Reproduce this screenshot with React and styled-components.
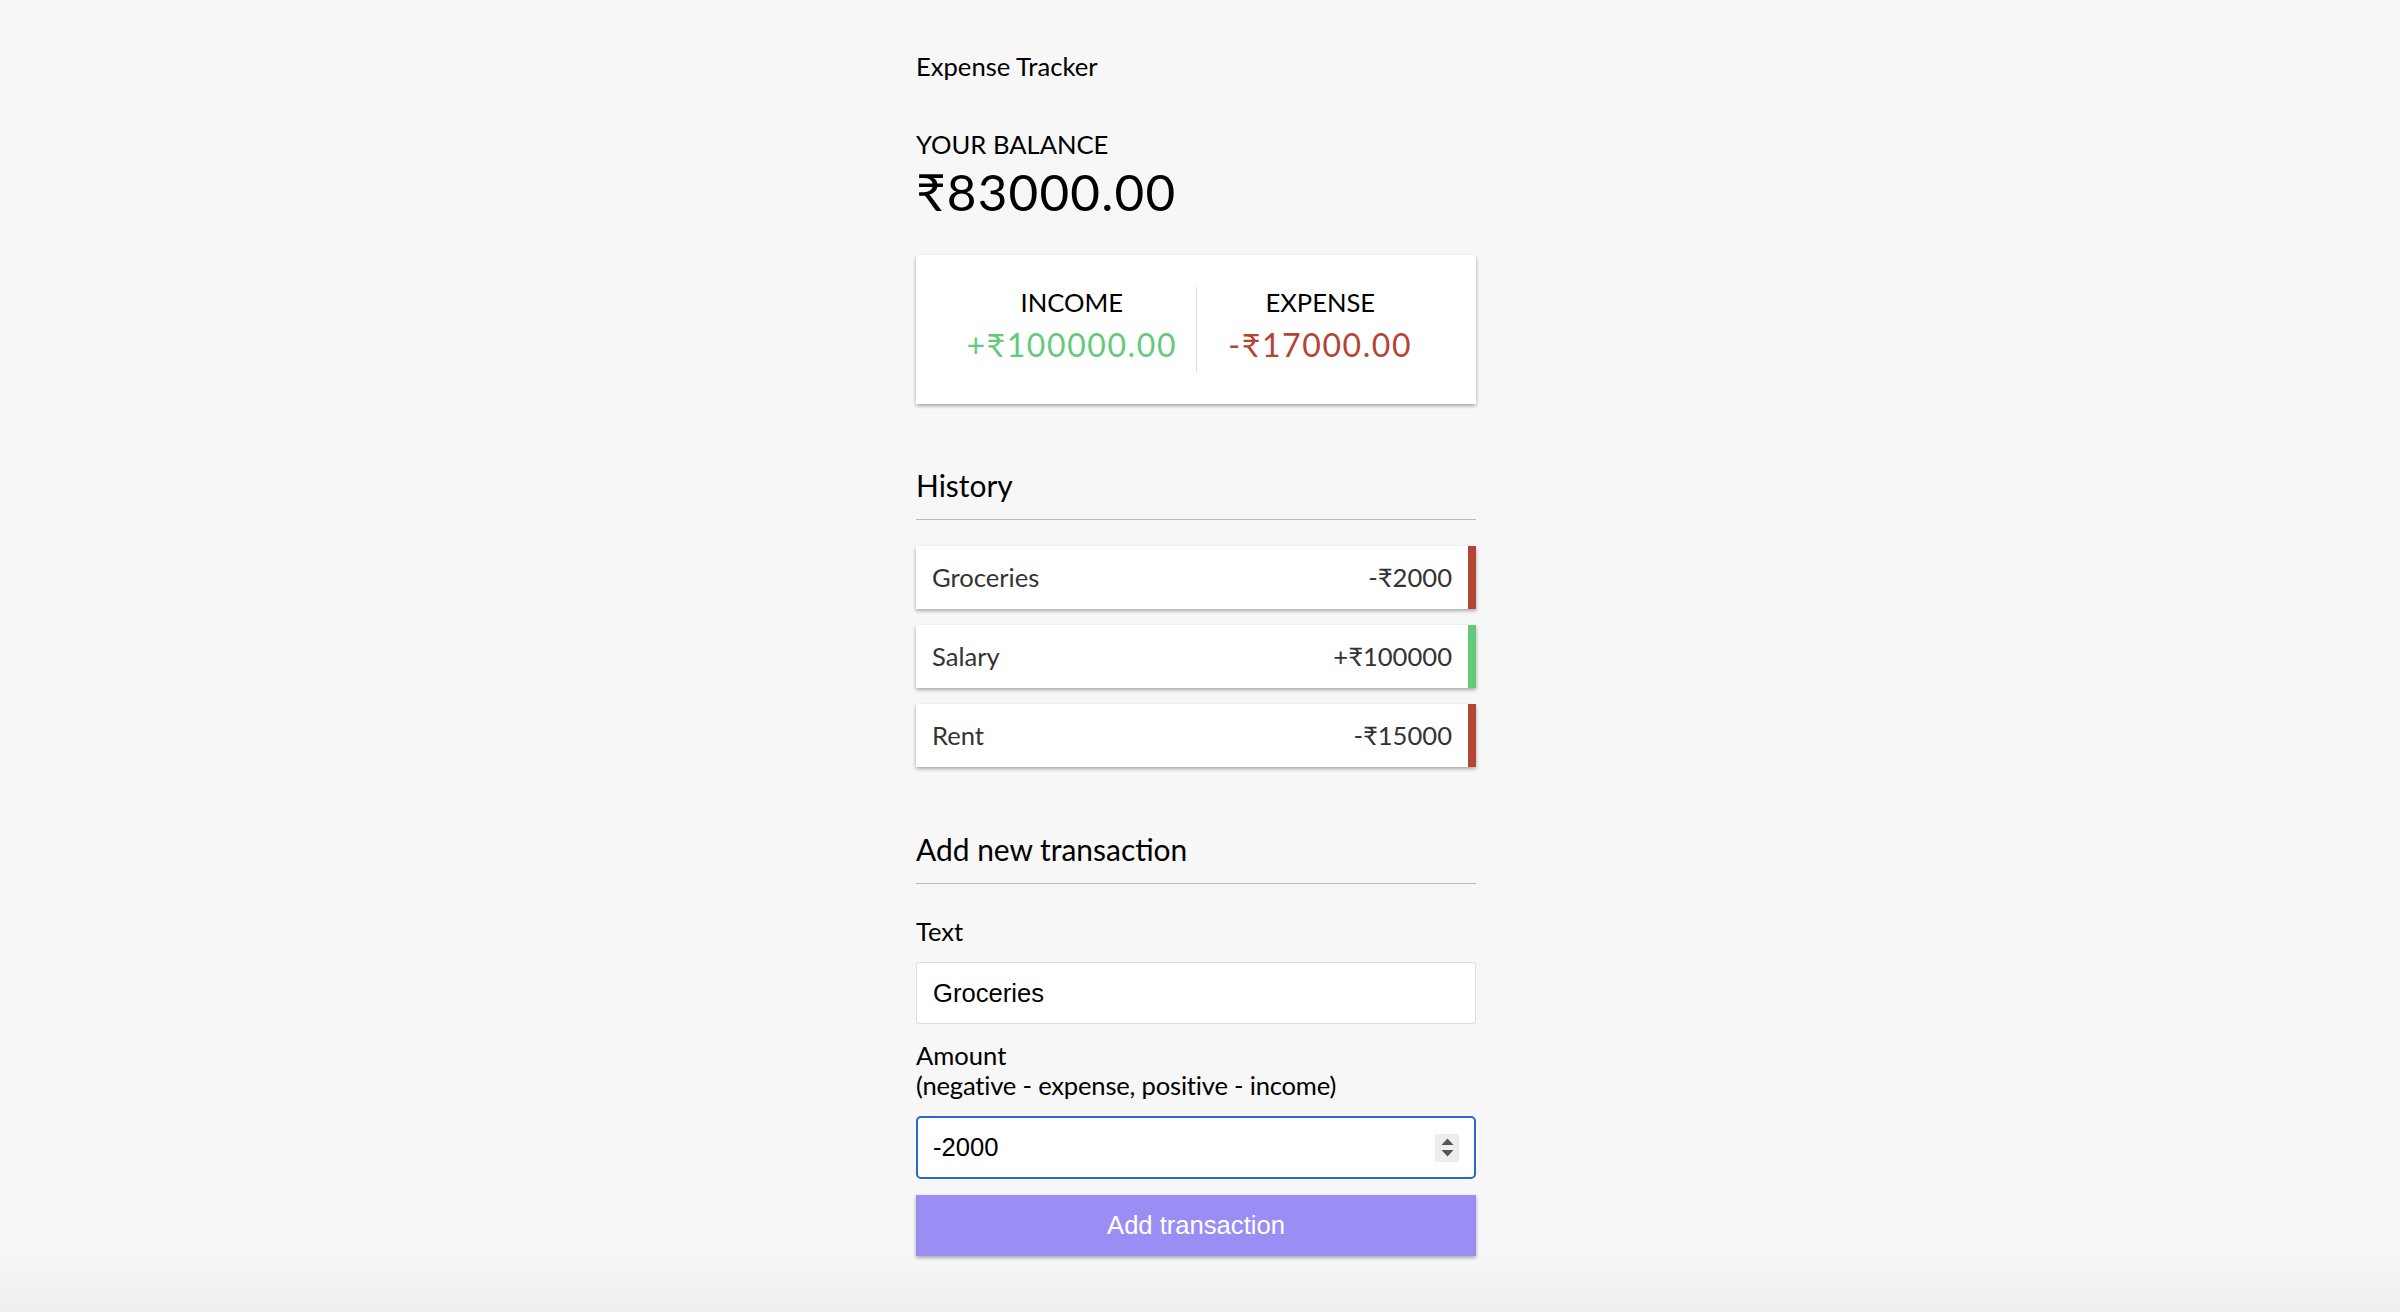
import styled, { createGlobalStyle } from "styled-components";

const GlobalStyle = createGlobalStyle`
  * {
    box-sizing: border-box;
  }
  body {
    margin: 0;
    background-color: #f7f7f7;
    font-family: "Lato", "Noto Sans", sans-serif;
  }
`;

const Page = styled.div`
  min-height: 100vh;
  display: flex;
  justify-content: center;
  padding-right: 8px;
  background: linear-gradient(to bottom, #f7f7f7 calc(100% - 60px), #eeeeee);
`;

const Container = styled.div`
  width: 560px;
  padding-top: 51px;
`;

const Header = styled.h2`
  margin: 0;
  font-size: 25.6px;
  line-height: 31px;
  font-weight: 400;
  color: #000;
`;

const SmallHeading = styled.h4`
  margin: 0;
  margin-top: ${(p) => p.$top || "0"};
  font-size: 25.6px;
  line-height: 31px;
  font-weight: 400;
  text-transform: uppercase;
  color: #000;
`;

const Balance = styled.h1`
  margin: 0;
  font-size: 51.2px;
  line-height: 63px;
  font-weight: 400;
  letter-spacing: 1.2px;
  color: #000;
`;

const IncExpBox = styled.div`
  background-color: #fff;
  box-shadow: 0 1.6px 4.8px rgba(0, 0, 0, 0.12), 0 1.6px 3.2px rgba(0, 0, 0, 0.24);
  padding: 32px;
  display: flex;
  justify-content: space-between;
  margin: 32px 0;
`;

const IncExpColumn = styled.div`
  flex: 1;
  text-align: center;
  &:first-of-type {
    border-right: 1px solid #dedede;
  }
`;

const Money = styled.p`
  font-size: 32px;
  line-height: 38px;
  letter-spacing: 1.6px;
  margin: 8px 0;
  color: ${(p) => (p.$plus ? "#64c97a" : "#b44433")};
`;

const SectionTitle = styled.h3`
  margin: 64px 0 16px;
  padding-bottom: 16px;
  border-bottom: 1px solid #bbb;
  font-size: 29.95px;
  line-height: 35px;
  font-weight: 400;
  color: #000;
`;

const List = styled.ul`
  list-style-type: none;
  padding: 0;
  margin: 26px 0 65px;
`;

const Item = styled.li`
  background-color: #fff;
  box-shadow: 0 1.6px 4.8px rgba(0, 0, 0, 0.12), 0 1.6px 3.2px rgba(0, 0, 0, 0.24);
  color: #333;
  display: flex;
  justify-content: space-between;
  padding: 16px;
  margin: 16px 0;
  font-size: 25.6px;
  line-height: 31px;
  border-right: 8px solid ${(p) => (p.$plus ? "#64c97a" : "#b44433")};
`;

const FormControl = styled.div``;

const Label = styled.label`
  display: inline-block;
  margin: 16px 0;
  font-size: 25.6px;
  line-height: 30px;
  color: #000;
`;

const Hint = styled.span`
  letter-spacing: -0.2px;
`;

const Input = styled.input`
  display: block;
  width: 100%;
  border: ${(p) => (p.$focused ? "2px solid #2a66cf" : "1px solid #dedede")};
  border-radius: ${(p) => (p.$focused ? "5px" : "3px")};
  font-family: "Liberation Sans", Arial, sans-serif;
  font-size: 25.6px;
  line-height: ${(p) => (p.$focused ? "29px" : "28px")};
  padding: ${(p) => (p.$focused ? "15px" : "16px")};
  background: #fff;
  color: #000;
  outline: none;
  -moz-appearance: textfield;
  &::-webkit-inner-spin-button,
  &::-webkit-outer-spin-button {
    -webkit-appearance: none;
    margin: 0;
  }
`;

const InputWrap = styled.div`
  position: relative;
`;

const Spinner = styled.span`
  position: absolute;
  right: 17px;
  top: 50%;
  transform: translateY(-50%);
  width: 24px;
  height: 28px;
  background: #ededed;
  display: flex;
  align-items: center;
  justify-content: center;
`;

const Button = styled.button`
  cursor: pointer;
  background-color: #9a8ef5;
  box-shadow: 0 1.6px 4.8px rgba(0, 0, 0, 0.12), 0 1.6px 3.2px rgba(0, 0, 0, 0.24);
  color: #fff;
  border: 0;
  display: block;
  font-family: "Liberation Sans", Arial, sans-serif;
  font-size: 25.6px;
  line-height: 29px;
  margin: 16px 0 40px;
  padding: 16px;
  width: 100%;
`;

const transactions = [
  { id: 1, text: "Groceries", amount: -2000 },
  { id: 2, text: "Salary", amount: 100000 },
  { id: 3, text: "Rent", amount: -15000 },
];

const App = () => {
  const amounts = transactions.map((t) => t.amount);
  const total = amounts.reduce((a, b) => a + b, 0).toFixed(2);
  const income = amounts.filter((a) => a > 0).reduce((a, b) => a + b, 0).toFixed(2);
  const expense = (amounts.filter((a) => a < 0).reduce((a, b) => a + b, 0) * -1).toFixed(2);

  return (
    <Page>
      <GlobalStyle />
      <Container>
        <Header>Expense Tracker</Header>

        <SmallHeading $top="47px">Your Balance</SmallHeading>
        <Balance>₹{total}</Balance>

        <IncExpBox>
          <IncExpColumn>
            <SmallHeading>Income</SmallHeading>
            <Money $plus>+₹{income}</Money>
          </IncExpColumn>
          <IncExpColumn>
            <SmallHeading>Expense</SmallHeading>
            <Money>-₹{expense}</Money>
          </IncExpColumn>
        </IncExpBox>

        <SectionTitle>History</SectionTitle>
        <List>
          {transactions.map((t) => (
            <Item key={t.id} $plus={t.amount > 0}>
              {t.text}
              <span>
                {t.amount < 0 ? "-" : "+"}₹{Math.abs(t.amount)}
              </span>
            </Item>
          ))}
        </List>

        <SectionTitle>Add new transaction</SectionTitle>
        <form onSubmit={(e) => e.preventDefault()}>
          <FormControl>
            <Label htmlFor="text">Text</Label>
            <Input type="text" id="text" defaultValue="Groceries" placeholder="Enter text..." />
          </FormControl>
          <FormControl>
            <Label htmlFor="amount">
              Amount <br />
              <Hint>(negative - expense, positive - income)</Hint>
            </Label>
            <InputWrap>
              <Input type="number" id="amount" defaultValue="-2000" $focused />
              <Spinner>
                <svg width="13" height="19" viewBox="0 0 13 19">
                  <path d="M6.5 0.5 L12.5 7 L0.5 7 Z" fill="#555" />
                  <path d="M6.5 18.5 L12.5 12 L0.5 12 Z" fill="#555" />
                </svg>
              </Spinner>
            </InputWrap>
          </FormControl>
          <Button type="submit">Add transaction</Button>
        </form>
      </Container>
    </Page>
  );
};

export default App;
